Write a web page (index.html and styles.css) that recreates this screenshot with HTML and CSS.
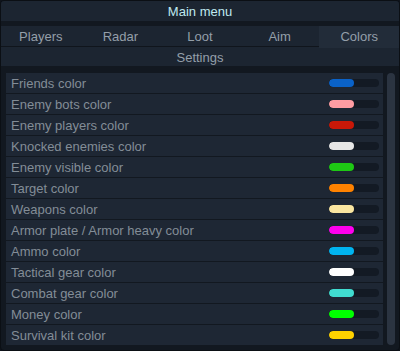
FILE: index.html
```html
<!DOCTYPE html>
<html lang="en">
<head>
  <meta charset="UTF-8" />
  <title>Main menu</title>
  <link rel="stylesheet" href="styles.css">
</head>
<body>
  <div class="window">
    <div class="title">Main menu</div>

    <nav class="tabs">
      <div class="tab">Players</div>
      <div class="tab">Radar</div>
      <div class="tab">Loot</div>
      <div class="tab">Aim</div>
      <div class="tab active">Colors</div>
    </nav>
    <div class="subtitle">Settings</div>

    <div class="content">
      <div class="list">
        <div class="row"><span>Friends color</span><div class="bar"><i style="background:#0a62c8"></i></div></div>
        <div class="row"><span>Enemy bots color</span><div class="bar"><i style="background:#ff9ca2"></i></div></div>
        <div class="row"><span>Enemy players color</span><div class="bar"><i style="background:#c81808"></i></div></div>
        <div class="row"><span>Knocked enemies color</span><div class="bar"><i style="background:#e6e6e6"></i></div></div>
        <div class="row"><span>Enemy visible color</span><div class="bar"><i style="background:#1ec814"></i></div></div>
        <div class="row"><span>Target color</span><div class="bar"><i style="background:#ff8200"></i></div></div>
        <div class="row"><span>Weapons color</span><div class="bar"><i style="background:#fae6a0"></i></div></div>
        <div class="row"><span>Armor plate / Armor heavy color</span><div class="bar"><i style="background:#ff00ee"></i></div></div>
        <div class="row"><span>Ammo color</span><div class="bar"><i style="background:#00b4f0"></i></div></div>
        <div class="row"><span>Tactical gear color</span><div class="bar"><i style="background:#ffffff"></i></div></div>
        <div class="row"><span>Combat gear color</span><div class="bar"><i style="background:#40dcd0"></i></div></div>
        <div class="row"><span>Money color</span><div class="bar"><i style="background:#00ff00"></i></div></div>
        <div class="row"><span>Survival kit color</span><div class="bar"><i style="background:#ffd200"></i></div></div>
      </div>
      <div class="scrollbar"><div class="thumb"></div></div>
    </div>
  </div>
</body>
</html>
```

FILE: styles.css
```css
body {
  margin: 0;
  background-color: #0f141b;
  font-family: 'Liberation Sans', Arial, sans-serif;
  font-size: 13px;
}
.window {
  width: 400px;
  height: 351px;
  box-sizing: border-box;
  border: 1px solid #0b0f14;
  border-radius: 4px;
  background-color: #121820;
  overflow: hidden;
}
.title {
  height: 20px;
  line-height: 22px;
  text-align: center;
  background-color: #1c2531;
  color: #bfe9f0;
}
.tabs {
  display: grid;
  grid-template-columns: repeat(5, 1fr);
  margin-top: 5px;
  height: 20px;
  background-color: #1c2531;
  border-bottom: 1px solid #10151c;
}
.tab {
  line-height: 22px;
  text-align: center;
  color: #949fa9;
}
.tab.active {
  background-color: #222c39;
}
.subtitle {
  height: 19px;
  line-height: 21px;
  text-align: center;
  background-color: #1c2531;
  color: #949fa9;
}
.content {
  display: flex;
  padding: 7px 4px 0 5px;
  gap: 4px;
}
.list {
  flex: 1;
}
.row {
  display: flex;
  align-items: center;
  justify-content: space-between;
  height: 20px;
  padding: 0 4px 0 5px;
  background-color: #1e2734;
  border-bottom: 1px solid #121820;
  color: #838d97;
}
.row span {
  padding-top: 1px;
}
.bar {
  width: 50px;
  height: 8px;
  border-radius: 4px;
  background-color: #131a24;
  overflow: hidden;
}
.bar i {
  display: block;
  width: 25px;
  height: 100%;
  border-radius: 4px;
}
.scrollbar {
  width: 8px;
  height: 272px;
}
.thumb {
  height: 100%;
  border-radius: 4px;
  background-color: #2b3441;
}
```
